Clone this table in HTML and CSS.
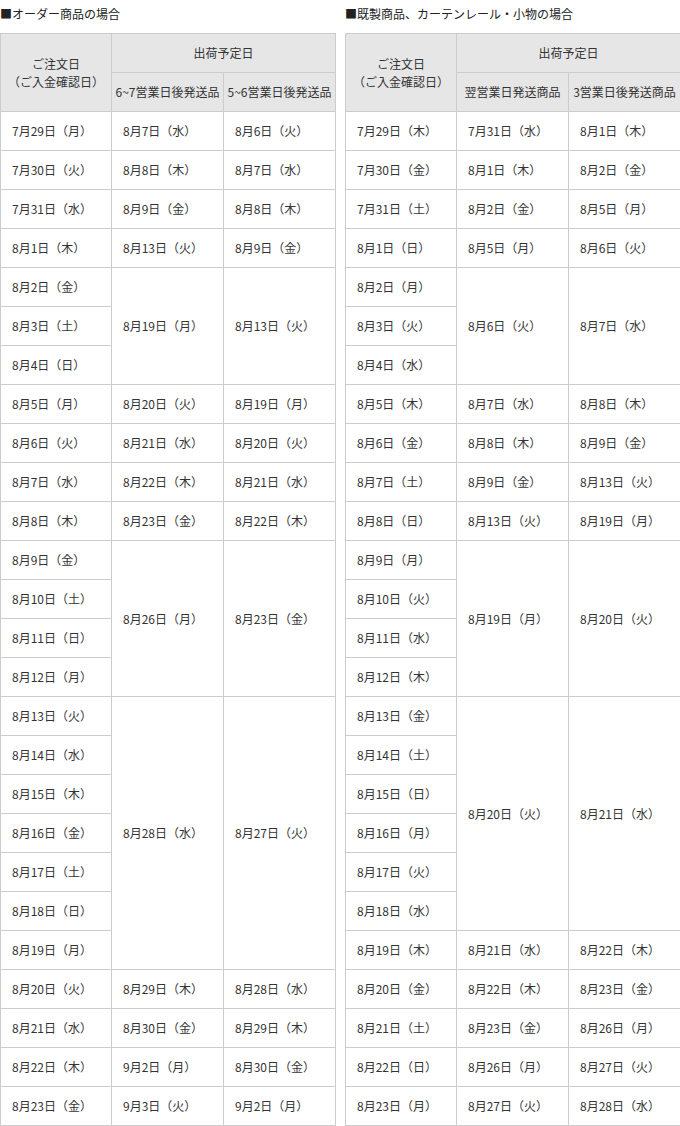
FILE: index.html
```html
<!DOCTYPE html>
<html lang="ja">
<head>
<meta charset="utf-8">
<link rel="stylesheet" href="styles.css">
</head>
<body>
<div class="wrap">
  <section class="block">
    <h2 class="title">■オーダー商品の場合</h2>
    <table class="sched">
      <colgroup><col class="c1"><col class="c2"><col class="c3"></colgroup>
      <thead>
        <tr><th rowspan="2">ご注文日<br>（ご入金確認日）</th><th colspan="2">出荷予定日</th></tr>
        <tr><th>6~7営業日後発送品</th><th>5~6営業日後発送品</th></tr>
      </thead>
      <tbody>
        <tr><td>7月29日（月）</td><td>8月7日（水）</td><td>8月6日（火）</td></tr>
        <tr><td>7月30日（火）</td><td>8月8日（木）</td><td>8月7日（水）</td></tr>
        <tr><td>7月31日（水）</td><td>8月9日（金）</td><td>8月8日（木）</td></tr>
        <tr><td>8月1日（木）</td><td>8月13日（火）</td><td>8月9日（金）</td></tr>
        <tr><td>8月2日（金）</td><td rowspan="3">8月19日（月）</td><td rowspan="3">8月13日（火）</td></tr>
        <tr><td>8月3日（土）</td></tr>
        <tr><td>8月4日（日）</td></tr>
        <tr><td>8月5日（月）</td><td>8月20日（火）</td><td>8月19日（月）</td></tr>
        <tr><td>8月6日（火）</td><td>8月21日（水）</td><td>8月20日（火）</td></tr>
        <tr><td>8月7日（水）</td><td>8月22日（木）</td><td>8月21日（水）</td></tr>
        <tr><td>8月8日（木）</td><td>8月23日（金）</td><td>8月22日（木）</td></tr>
        <tr><td>8月9日（金）</td><td rowspan="4">8月26日（月）</td><td rowspan="4">8月23日（金）</td></tr>
        <tr><td>8月10日（土）</td></tr>
        <tr><td>8月11日（日）</td></tr>
        <tr><td>8月12日（月）</td></tr>
        <tr><td>8月13日（火）</td><td rowspan="7">8月28日（水）</td><td rowspan="7">8月27日（火）</td></tr>
        <tr><td>8月14日（水）</td></tr>
        <tr><td>8月15日（木）</td></tr>
        <tr><td>8月16日（金）</td></tr>
        <tr><td>8月17日（土）</td></tr>
        <tr><td>8月18日（日）</td></tr>
        <tr><td>8月19日（月）</td></tr>
        <tr><td>8月20日（火）</td><td>8月29日（木）</td><td>8月28日（水）</td></tr>
        <tr><td>8月21日（水）</td><td>8月30日（金）</td><td>8月29日（木）</td></tr>
        <tr><td>8月22日（木）</td><td>9月2日（月）</td><td>8月30日（金）</td></tr>
        <tr><td>8月23日（金）</td><td>9月3日（火）</td><td>9月2日（月）</td></tr>
      </tbody>
    </table>
  </section>
  <section class="block">
    <h2 class="title">■既製商品、カーテンレール・小物の場合</h2>
    <table class="sched">
      <colgroup><col class="c1"><col class="c2"><col class="c3"></colgroup>
      <thead>
        <tr><th rowspan="2">ご注文日<br>（ご入金確認日）</th><th colspan="2">出荷予定日</th></tr>
        <tr><th>翌営業日発送商品</th><th>3営業日後発送商品</th></tr>
      </thead>
      <tbody>
        <tr><td>7月29日（木）</td><td>7月31日（水）</td><td>8月1日（木）</td></tr>
        <tr><td>7月30日（金）</td><td>8月1日（木）</td><td>8月2日（金）</td></tr>
        <tr><td>7月31日（土）</td><td>8月2日（金）</td><td>8月5日（月）</td></tr>
        <tr><td>8月1日（日）</td><td>8月5日（月）</td><td>8月6日（火）</td></tr>
        <tr><td>8月2日（月）</td><td rowspan="3">8月6日（火）</td><td rowspan="3">8月7日（水）</td></tr>
        <tr><td>8月3日（火）</td></tr>
        <tr><td>8月4日（水）</td></tr>
        <tr><td>8月5日（木）</td><td>8月7日（水）</td><td>8月8日（木）</td></tr>
        <tr><td>8月6日（金）</td><td>8月8日（木）</td><td>8月9日（金）</td></tr>
        <tr><td>8月7日（土）</td><td>8月9日（金）</td><td>8月13日（火）</td></tr>
        <tr><td>8月8日（日）</td><td>8月13日（火）</td><td>8月19日（月）</td></tr>
        <tr><td>8月9日（月）</td><td rowspan="4">8月19日（月）</td><td rowspan="4">8月20日（火）</td></tr>
        <tr><td>8月10日（火）</td></tr>
        <tr><td>8月11日（水）</td></tr>
        <tr><td>8月12日（木）</td></tr>
        <tr><td>8月13日（金）</td><td rowspan="6">8月20日（火）</td><td rowspan="6">8月21日（水）</td></tr>
        <tr><td>8月14日（土）</td></tr>
        <tr><td>8月15日（日）</td></tr>
        <tr><td>8月16日（月）</td></tr>
        <tr><td>8月17日（火）</td></tr>
        <tr><td>8月18日（水）</td></tr>
        <tr><td>8月19日（木）</td><td>8月21日（水）</td><td>8月22日（木）</td></tr>
        <tr><td>8月20日（金）</td><td>8月22日（木）</td><td>8月23日（金）</td></tr>
        <tr><td>8月21日（土）</td><td>8月23日（金）</td><td>8月26日（月）</td></tr>
        <tr><td>8月22日（日）</td><td>8月26日（月）</td><td>8月27日（火）</td></tr>
        <tr><td>8月23日（月）</td><td>8月27日（火）</td><td>8月28日（水）</td></tr>
      </tbody>
    </table>
  </section>
</div>
</body>
</html>
```

FILE: styles.css
```css
html, body {
  margin: 0;
  padding: 0;
  background: #fff;
}
body {
  font-family: "Noto Sans CJK JP", "Noto Sans", sans-serif;
  font-size: 12px;
  color: #333;
}
.wrap {
  display: flex;
  gap: 10px;
  width: 680px;
}
.block {
  width: 335px;
}
.title {
  margin: 0;
  height: 33px;
  box-sizing: border-box;
  padding-top: 5px;
  font-size: 12px;
  font-weight: normal;
  line-height: 18px;
  color: #222;
}
.sched {
  border-collapse: collapse;
  table-layout: fixed;
  width: 335px;
}
.c1 { width: 111px; }
.c2 { width: 112px; }
.c3 { width: 112px; }
.sched th,
.sched td {
  border: 1px solid #ccc;
  height: 38px;
  padding: 0 0 0 11px;
  box-sizing: border-box;
  line-height: 18px;
  vertical-align: middle;
  white-space: nowrap;
  overflow: hidden;
}
.sched td {
  height: 39px;
}
.sched th {
  height: 39px;
  background: #e6e6e6;
  font-weight: normal;
  text-align: center;
  padding: 0;
  color: #333;
}
```
